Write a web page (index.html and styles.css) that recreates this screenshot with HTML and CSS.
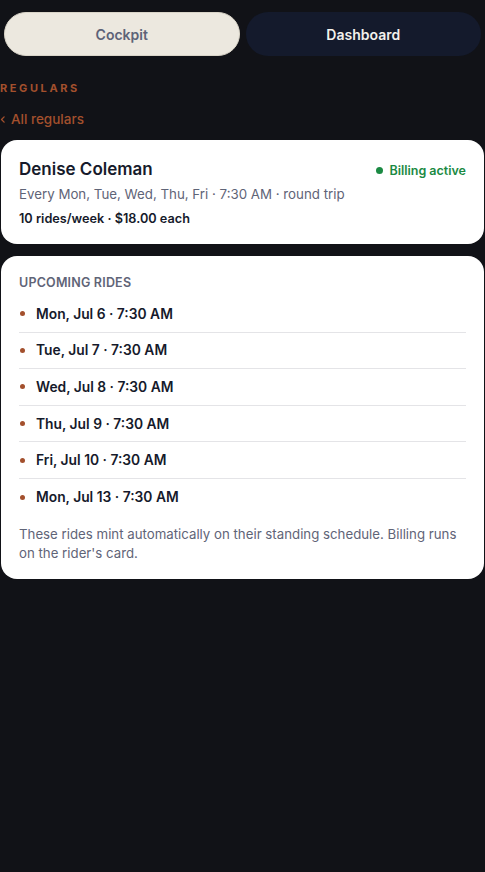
FILE: index.html
```html
<!DOCTYPE html>
<html>
<head>
<meta charset="utf-8">
<link rel="stylesheet" href="styles.css">
</head>
<body>
<div class="page">
  <nav class="tabs">
    <button class="tab tab-light">Cockpit</button>
    <button class="tab tab-dark">Dashboard</button>
  </nav>
  <div class="eyebrow">REGULARS</div>
  <a class="back"><svg class="chev" viewBox="0 0 8 10" width="6" height="9"><path d="M5.5 1.5 L2 5 L5.5 8.5" fill="none" stroke="currentColor" stroke-width="1.8" stroke-linecap="round" stroke-linejoin="round"/></svg>All regulars</a>
  <section class="card summary">
    <div class="summary-top">
      <h1 class="name">Denise Coleman</h1>
      <span class="status"><span class="status-dot"></span>Billing active</span>
    </div>
    <p class="schedule">Every Mon, Tue, Wed, Thu, Fri · 7:30 AM · round trip</p>
    <p class="rate">10 rides/week · $18.00 each</p>
  </section>
  <section class="card rides">
    <h2 class="rides-title">UPCOMING RIDES</h2>
    <ul class="ride-list">
      <li class="ride"><span class="ride-dot"></span>Mon, Jul 6 · 7:30 AM</li>
      <li class="ride"><span class="ride-dot"></span>Tue, Jul 7 · 7:30 AM</li>
      <li class="ride"><span class="ride-dot"></span>Wed, Jul 8 · 7:30 AM</li>
      <li class="ride"><span class="ride-dot"></span>Thu, Jul 9 · 7:30 AM</li>
      <li class="ride"><span class="ride-dot"></span>Fri, Jul 10 · 7:30 AM</li>
      <li class="ride"><span class="ride-dot"></span>Mon, Jul 13 · 7:30 AM</li>
    </ul>
    <p class="note">These rides mint automatically on their standing schedule. Billing runs on the rider's card.</p>
  </section>
</div>
</body>
</html>
```
FILE: styles.css
```css
* { box-sizing: border-box; }
html, body {
  margin: 0;
  padding: 0;
  background: #111217;
  font-family: Inter, "Noto Sans", sans-serif;
  -webkit-font-smoothing: antialiased;
}
.page {
  padding: 12px 0 0;
}
.tabs {
  display: flex;
  gap: 6px;
  padding: 0 4px;
}
.tab {
  flex: 1;
  height: 44px;
  border-radius: 22px;
  font-family: Inter, sans-serif;
  font-size: 14px;
  font-weight: 600;
  border: 1px solid transparent;
}
.tab-light {
  background: #ece8df;
  color: #5d6378;
  border-color: #d9d4c8;
}
.tab-dark {
  background: #141a2c;
  color: #f3f1ec;
}
.eyebrow {
  margin-top: 25px;
  font-size: 11px;
  font-weight: 700;
  letter-spacing: 2.6px;
  color: #a3502d;
  line-height: 14px;
}
.back {
  display: flex;
  align-items: center;
  gap: 5px;
  margin-top: 15px;
  font-size: 13.5px;
  font-weight: 500;
  color: #a3502d;
  line-height: 18px;
}
.chev { display: block; }
.card {
  background: #fff;
  border-radius: 16px;
  margin: 0 1px;
}
.summary {
  margin-top: 12px;
  padding: 17px 18px 17px;
}
.summary-top {
  display: flex;
  justify-content: space-between;
  align-items: center;
}
.name {
  margin: 0;
  font-size: 17px;
  font-weight: 600;
  color: #161a2b;
  line-height: 24px;
}
.status {
  display: flex;
  align-items: center;
  gap: 6px;
  font-size: 12.5px;
  font-weight: 600;
  color: #1b8a43;
  margin-top: 2px;
}
.status-dot {
  width: 7px;
  height: 7px;
  border-radius: 50%;
  background: #1b8a43;
}
.schedule {
  margin: 4px 0 0;
  font-size: 13.3px;
  color: #5f6477;
  line-height: 18px;
}
.rate {
  margin: 7px 0 0;
  font-size: 12.7px;
  font-weight: 600;
  color: #161a2b;
  line-height: 17px;
}
.rides {
  margin-top: 12px;
  padding: 19px 18px 15px;
}
.rides-title {
  margin: 0;
  font-size: 12.5px;
  font-weight: 600;
  color: #5f6477;
  line-height: 16px;
  letter-spacing: 0.2px;
}
.ride-list {
  list-style: none;
  margin: 5px 0 0;
  padding: 0;
}
.ride {
  display: flex;
  align-items: center;
  gap: 11px;
  height: 36.6px;
  font-size: 13.8px;
  font-weight: 600;
  color: #161a2b;
  border-bottom: 1px solid #e4e4e7;
  padding-left: 1px;
}
.ride:last-child { border-bottom: none; }
.ride-dot {
  width: 5px;
  height: 5px;
  border-radius: 50%;
  background: #a3502d;
}
.note {
  margin: 9px 0 0;
  font-size: 13.25px;
  color: #5f6477;
  line-height: 19.5px;
}
```
